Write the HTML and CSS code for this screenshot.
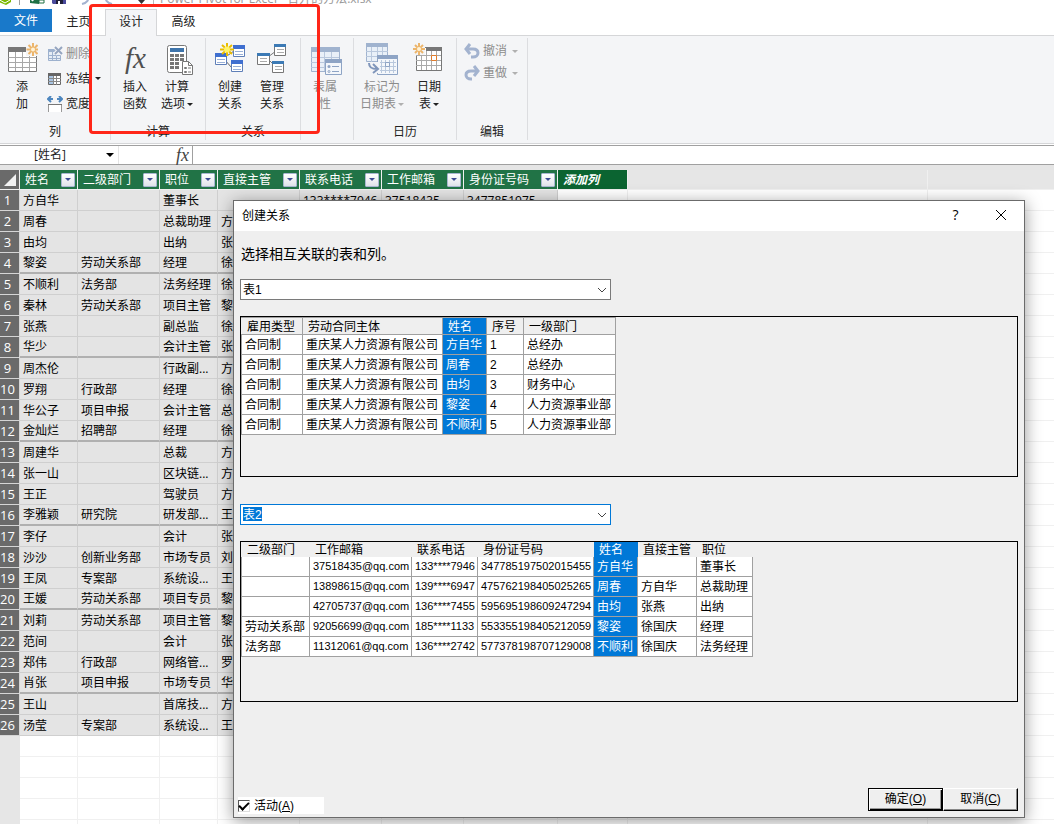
FILE: index.html
```html
<!DOCTYPE html>
<html lang="zh-CN">
<head>
  <meta charset="UTF-8">
  <title>Power Pivot for Excel - 合并的方法.xlsx</title>
  <link rel="stylesheet" href="styles.css">
</head>
<body>

  <header class="titlebar">
    <svg width="150" height="16" viewBox="0 0 150 16">
      <path d="M-4 8L5 4l6 3v6l-5 3-10-4z" fill="#7ab800"/><path d="M-2 10l7 4 5-3" fill="none" stroke="#fff"/>
      <path d="M19.5 0v16" stroke="#a0a0a0"/>
      <path d="M30 3l9-2v14l-9-1z" fill="#1e7145"/><path d="M39 4h5v10h-5z" fill="#fff" stroke="#1e7145"/><path d="M39 11h5M32 5l5 7" stroke="#1e7145"/><path d="M32 12l5-7" stroke="#fff" stroke-width="2"/>
      <path d="M52 2h14v13H53l-1-1z" fill="#4a4a9c"/><path d="M55 2h8v6h-8z" fill="#e6e6f5"/><path d="M56 11h7v4h-7z" fill="#1f1f3a"/><path d="M58 12h2v3h-2z" fill="#fff"/>
      <path d="M82 15c5-1 7-4 6-8" fill="none" stroke="#a3b3d0" stroke-width="2"/>
      <path d="M112 15c-5-1-7-4-6-8" fill="none" stroke="#a3b3d0" stroke-width="2"/>
      <path d="M138 11h7l-3.500 4z" fill="#333"/>
    </svg>
    <span class="titlebar-text">Power Pivot for Excel - 合并的方法.xlsx</span>
  </header>

  <nav class="tabs">
    <button class="tab tab-file">文件</button>
    <button class="tab">主页</button>
    <button class="tab tab-active">设计</button>
    <button class="tab">高级</button>
  </nav>

  <section class="ribbon">
    <div class="group group-cols">
      <div class="group-items">
        <button class="big">
          <svg width="32" height="32" viewBox="0 0 32 32">
            <path d="M2.500 4.500h28v24h-28z" fill="#fff" stroke="#777"/><path d="M2 4h20v5H2z" fill="#777"/>
            <path d="M2.500 14.500h28M2.500 19.500h28M2.500 24.500h28M9.500 9v19M16.500 9v19M23.500 9v19" stroke="#a8a8a8"/>
            <path d="M20 0h12v13H20z" fill="#f4f5f7"/>
            <path d="M27 0v13M20.500 6.500h13M22.500 2l9 9M31.500 2l-9 9" stroke="#ecb56c" stroke-width="2"/><circle cx="27" cy="6.500" r="2" fill="#fff3d6"/>
          </svg>
          <span>添<br>加</span>
        </button>
        <div class="small-list">
          <button class="small disabled">
            <svg width="16" height="16" viewBox="0 0 16 16">
              <path d="M1.500 3.500h12v11h-12z" fill="#e6edf6" stroke="#9db1ce"/><path d="M1 3h10v3H1z" fill="#9db1ce"/><path d="M1 9.500h13M1 12.500h13M5.500 6v8M9.500 6v8" stroke="#9db1ce"/>
              <path d="M8 1l7 7M15 1L8 8" stroke="#f4f5f7" stroke-width="4"/><path d="M8 1l7 7M15 1L8 8" stroke="#95a5c0" stroke-width="2"/>
            </svg>
            删除
          </button>
          <button class="small">
            <svg width="16" height="16" viewBox="0 0 16 16">
              <path d="M1.500 2.500h12v11h-12z" fill="#fff" stroke="#666"/><path d="M1 2h13v3H1z" fill="#666"/><path d="M2 5h4v8H2z" fill="#a9c5e3"/><path d="M1 7.500h13M1 10.500h13M6.500 5v9M9.500 5v9" stroke="#888"/>
            </svg>
            冻结 <i class="arrow"></i>
          </button>
          <button class="small">
            <svg width="16" height="16" viewBox="0 0 16 16">
              <path d="M1.500 8.500h13v9h-13z" fill="#fff" stroke="#999"/><path d="M1 8.500h14" stroke="#777"/>
              <path d="M1 3h5M10 3h5M4 0L1 3l3 3M12 0l3 3-3 3" fill="none" stroke="#4d86bf" stroke-width="2"/>
            </svg>
            宽度
          </button>
        </div>
      </div>
      <div class="group-label">列</div>
    </div>

    <div class="group">
      <div class="group-items">
        <button class="big">
          <svg width="32" height="32" viewBox="0 0 32 32">
            <text x="6" y="25" class="fx-big">fx</text>
          </svg>
          <span>插入<br>函数</span>
        </button>
        <button class="big">
          <svg width="32" height="32" viewBox="0 0 32 32">
            <rect x="6.500" y="2.500" width="19" height="27" rx="2" fill="#fff" stroke="#777"/><path d="M9 5h14v4H9z" fill="#3e74ab"/>
            <path d="M9 11h4v3H9zM14 11h4v3h-4zM19 11h4v3h-4zM9 15h4v3H9zM14 15h4v3h-4zM19 15h4v3h-4zM9 19h4v3H9zM14 19h4v3h-4zM9 23h4v3H9zM14 23h4v3h-4z" fill="#777"/>
            <path d="M21.500 18.500h6l4 4v9h-10z" fill="#fff" stroke="#777"/><path d="M27.500 18.500v4h4" fill="none" stroke="#777"/><path d="M23.500 24.500h2v1h-2zM23.500 28.500h2v1h-2zM27 25h3M27 29h3" fill="none" stroke="#777"/>
          </svg>
          <span>计算<br>选项 <i class="arrow"></i></span>
        </button>
      </div>
      <div class="group-label">计算</div>
    </div>

    <div class="group">
      <div class="group-items">
        <button class="big">
          <svg width="32" height="32" viewBox="0 0 32 32">
            <path d="M10 15L20 8M10 16l8 9" stroke="#666"/>
            <g fill="#fff" stroke="#5f7fb8"><path d="M19.500 3.500h11v10h-11zM1.500 11.500h11v10h-11zM17.500 18.500h11v10h-11z"/></g>
            <path d="M19 2h12v4H19zM1 10h12v4H1zM17 17h12v4H17z" fill="#3f6fd0"/>
            <path d="M21 8.500h8M21 11.500h8M3 16.500h8M3 19.500h8M19 23.500h8M19 26.500h8" stroke="#9ab0d8"/>
            <path d="M13 0v13M6 6.500h14M8 2l10 9M18 2L8 11" stroke="#e9bd00" stroke-width="2"/><circle cx="13" cy="6.500" r="3" fill="#fff36b"/>
          </svg>
          <span>创建<br>关系</span>
        </button>
        <button class="big">
          <svg width="32" height="32" viewBox="0 0 32 32">
            <path d="M12 14l8-6M13 17l6 6" stroke="#777"/>
            <g fill="#fff" stroke="#777"><path d="M18.500 1.500h11v11h-11zM1.500 10.500h12v11h-12zM16.500 18.500h11v11h-11z"/></g>
            <path d="M18 1h12v3H18zM1 10h13v3H1zM16 18h12v3H16z" fill="#3c7ab5"/>
            <path d="M21 6.500h7M21 9.500h7M4 15.500h7M4 18.500h7M19 23.500h7M19 26.500h7" stroke="#aaa"/>
          </svg>
          <span>管理<br>关系</span>
        </button>
      </div>
      <div class="group-label">关系</div>
    </div>

    <div class="group">
      <div class="group-items">
        <button class="big disabled">
          <svg class="spill" width="32" height="32" viewBox="0 0 32 32">
            <path d="M2.500 4.500h28v24h-28z" fill="#e9f0f8" stroke="#a0b3cf"/><path d="M2 4h29v5H2z" fill="#a0b3cf"/><path d="M2 14.500h28M2 19.500h28M2 24.500h28M8.500 9v19M15.500 9v19M22.500 9v19" stroke="#b9c8dd"/>
            <path d="M16.500 16.500h16v15h-16z" fill="#f4f7fb" stroke="#8ea4c5"/><path d="M16 16h17v4H16z" fill="#8ea4c5"/><path d="M23 23.500h7M23 28.500h7" stroke="#8ea4c5"/><circle cx="20" cy="23.500" r="1.500" fill="#8ea4c5"/><circle cx="20" cy="28.500" r="1" fill="none" stroke="#8ea4c5"/>
          </svg>
          <span>表属<br>性</span>
        </button>
      </div>
    </div>

    <div class="group group-date">
      <div class="group-items">
        <button class="big big-wide disabled">
          <svg width="32" height="32" viewBox="0 0 32 32">
            <path d="M.5.500h21v18H.5z" fill="#e9f0f8" stroke="#a0b3cf"/><path d="M0 0h22v4H0z" fill="#a0b3cf"/><path d="M0 8.500h22M0 13.500h22M5.500 4v15M11.500 4v15M16.500 4v15" stroke="#b9c8dd"/>
            <path d="M11.500 12.500h20v19h-20z" fill="#f4f7fb" stroke="#8ea4c5"/><path d="M11 12h21v4H11z" fill="#8ea4c5"/><path d="M14 19.500h16M14 23.500h16M14 27.500h16M15.500 17v13M19.500 17v13M23.500 17v13M27.500 17v13" stroke="#b9c8dd"/><path d="M19.500 19.500h4v4h-4z" fill="none" stroke="#8ea4c5"/>
            <path d="M1 19h11v11H1z" fill="#f4f5f7"/>
            <path d="M3 20c0 5 3 6 8 6M7 21l5 5-5 4" fill="none" stroke="#8096bb" stroke-width="2"/>
          </svg>
          <span>标记为<br>日期表 <i class="arrow"></i></span>
        </button>
        <button class="big">
          <svg width="32" height="32" viewBox="0 0 32 32">
            <path d="M3.500 4.500h25v23h-25z" fill="#fff" stroke="#777"/><path d="M13 4h16v4H13z" fill="#777"/>
            <path d="M3 12.500h25M3 17.500h25M3 22.500h25M8.500 12v15M13.500 8v19M18.500 8v19M23.500 8v19" stroke="#aaa"/>
            <path d="M0 0h12v12H0z" fill="#f4f5f7"/>
            <path d="M18.500 12.500h5v5h-5z" fill="#fff" stroke="#e07c2c"/>
            <path d="M6 0v12M0 6h12M2 2l8 8M10 2l-8 8" stroke="#ecb56c" stroke-width="2"/><circle cx="6" cy="6" r="2" fill="#fff3d6"/>
          </svg>
          <span>日期<br>表 <i class="arrow"></i></span>
        </button>
      </div>
      <div class="group-label">日历</div>
    </div>

    <div class="group group-edit">
      <div class="small-list edit-list">
        <button class="small disabled">
          <svg width="16" height="16" viewBox="0 0 16 16">
            <path d="M2 6h7c4 0 5 2 5 4s-2 4-5 4H7M6 1L2 6l4 5" fill="none" stroke="#a3b3cf" stroke-width="3"/>
          </svg>
          撤消 <i class="arrow"></i>
        </button>
        <button class="small disabled">
          <svg width="16" height="16" viewBox="0 0 16 16">
            <path d="M14 6H7c-4 0-5 2-5 4s2 4 5 4h1M10 1l4 5-4 5" fill="none" stroke="#a3b3cf" stroke-width="3"/>
          </svg>
          重做 <i class="arrow"></i>
        </button>
      </div>
      <div class="group-label">编辑</div>
    </div>
  </section>

  <div class="formula-bar">
    <div class="name-box">
      <select aria-label="名称框"><option>[姓名]</option></select>
      <i class="arrow"></i>
    </div>
    <label class="fx-label" for="formula">fx</label>
    <input id="formula" class="formula">
  </div>

  <table class="sheet">
    <colgroup>
      <col class="w-num"><col class="w-58"><col class="w-82"><col class="w-58"><col class="w-82"><col class="w-82"><col class="w-82"><col class="w-94"><col class="w-70"><col class="w-300"><col>
    </colgroup>
    <thead>
      <tr>
        <th class="corner"><svg width="19" height="18" viewBox="0 0 19 18"><path d="M16 3v12H4z" fill="#f2f2f2"/></svg></th>
        <th><div class="head">姓名<button class="filter" aria-label="筛选姓名"></button></div></th>
        <th><div class="head">二级部门<button class="filter" aria-label="筛选二级部门"></button></div></th>
        <th><div class="head">职位<button class="filter" aria-label="筛选职位"></button></div></th>
        <th><div class="head">直接主管<button class="filter" aria-label="筛选直接主管"></button></div></th>
        <th><div class="head">联系电话<button class="filter" aria-label="筛选联系电话"></button></div></th>
        <th><div class="head">工作邮箱<button class="filter" aria-label="筛选工作邮箱"></button></div></th>
        <th><div class="head">身份证号码<button class="filter" aria-label="筛选身份证号码"></button></div></th>
        <th class="add-col">添加列</th>
        <th class="blank"></th>
        <th class="blank"></th>
      </tr>
    </thead>
    <tbody id="rows"></tbody>
  </table>

  <div class="dialog" role="dialog" aria-labelledby="dialogTitle">
    <div class="dialog-title">
      <span id="dialogTitle">创建关系</span>
      <button class="dialog-btn" aria-label="帮助">?</button>
      <button class="dialog-btn" aria-label="关闭">
        <svg width="12" height="12" viewBox="0 0 12 12"><path d="M1 1l10 10M11 1L1 11" stroke="#000"/></svg>
      </button>
    </div>

    <div class="dialog-body">
      <p>选择相互关联的表和列。</p>

      <div class="combo">
        <select aria-label="表"><option>表1</option></select>
        <svg width="10" height="6" viewBox="0 0 10 6"><path d="M1 1l4 4 4-4" fill="none" stroke="#444"/></svg>
      </div>
      <div class="panel">
        <table class="preview preview-lined">
          <colgroup><col class="w-62"><col class="w-140"><col class="w-44"><col class="w-37"><col class="w-92"></colgroup>
          <thead>
            <tr><th>雇用类型</th><th>劳动合同主体</th><th class="picked">姓名</th><th>序号</th><th>一级部门</th></tr>
          </thead>
          <tbody>
            <tr><td>合同制</td><td>重庆某人力资源有限公司</td><td class="picked">方自华</td><td>1</td><td>总经办</td></tr>
            <tr><td>合同制</td><td>重庆某人力资源有限公司</td><td class="picked">周春</td><td>2</td><td>总经办</td></tr>
            <tr><td>合同制</td><td>重庆某人力资源有限公司</td><td class="picked">由均</td><td>3</td><td>财务中心</td></tr>
            <tr><td>合同制</td><td>重庆某人力资源有限公司</td><td class="picked">黎姿</td><td>4</td><td>人力资源事业部</td></tr>
            <tr><td>合同制</td><td>重庆某人力资源有限公司</td><td class="picked">不顺利</td><td>5</td><td>人力资源事业部</td></tr>
          </tbody>
        </table>
      </div>

      <div class="combo combo-focus">
        <select aria-label="相关表"><option>表2</option></select>
        <svg width="10" height="6" viewBox="0 0 10 6"><path d="M1 1l4 4 4-4" fill="none" stroke="#444"/></svg>
      </div>
      <div class="panel">
        <table class="preview preview-plain">
          <colgroup><col class="w-69"><col class="w-102"><col class="w-66"><col class="w-116"><col class="w-44"><col class="w-59"><col class="w-56"></colgroup>
          <thead>
            <tr><th>二级部门</th><th>工作邮箱</th><th>联系电话</th><th>身份证号码</th><th class="picked">姓名</th><th>直接主管</th><th>职位</th></tr>
          </thead>
          <tbody>
            <tr><td></td><td class="num">37518435@qq.com</td><td class="num">133****7946</td><td class="num">347785197502015455</td><td class="picked">方自华</td><td></td><td>董事长</td></tr>
            <tr><td></td><td class="num">13898615@qq.com</td><td class="num">139****6947</td><td class="num">475762198405025265</td><td class="picked">周春</td><td>方自华</td><td>总裁助理</td></tr>
            <tr><td></td><td class="num">42705737@qq.com</td><td class="num">136****7455</td><td class="num">595695198609247294</td><td class="picked">由均</td><td>张燕</td><td>出纳</td></tr>
            <tr><td>劳动关系部</td><td class="num">92056699@qq.com</td><td class="num">185****1133</td><td class="num">553355198405212059</td><td class="picked">黎姿</td><td>徐国庆</td><td>经理</td></tr>
            <tr><td>法务部</td><td class="num">11312061@qq.com</td><td class="num">136****2742</td><td class="num">577378198707129008</td><td class="picked">不顺利</td><td>徐国庆</td><td>法务经理</td></tr>
          </tbody>
        </table>
      </div>
    </div>

    <div class="dialog-footer">
      <label class="active-check"><input type="checkbox" checked><span>活动(<u>A</u>)</span></label>
      <button class="push push-default">确定(<u>O</u>)</button>
      <button class="push">取消(<u>C</u>)</button>
    </div>
  </div>

  <div class="highlight-box"></div>

  <script>
    const people = [
      ['方自华', '', '董事长', '', '133****7946', '37518435', '3477851975'],
      ['周春', '', '总裁助理', '方'],
      ['由均', '', '出纳', '张'],
      ['黎姿', '劳动关系部', '经理', '徐'],
      ['不顺利', '法务部', '法务经理', '徐'],
      ['秦林', '劳动关系部', '项目主管', '黎'],
      ['张燕', '', '副总监', '徐'],
      ['华少', '', '会计主管', '张'],
      ['周杰伦', '', '行政副...', '方'],
      ['罗翔', '行政部', '经理', '徐'],
      ['华公子', '项目申报', '会计主管', '总'],
      ['金灿烂', '招聘部', '经理', '徐'],
      ['周建华', '', '总裁', '方'],
      ['张一山', '', '区块链...', '方'],
      ['王正', '', '驾驶员', '方'],
      ['李雅颖', '研究院', '研发部...', '王'],
      ['李仔', '', '会计', '张'],
      ['沙沙', '创新业务部', '市场专员', '刘'],
      ['王凤', '专案部', '系统设...', '王'],
      ['王媛', '劳动关系部', '项目专员', '黎'],
      ['刘莉', '劳动关系部', '项目主管', '黎'],
      ['范间', '', '会计', '张'],
      ['郑伟', '行政部', '网络管...', '罗'],
      ['肖张', '项目申报', '市场专员', '华'],
      ['王山', '', '首席技...', '方'],
      ['汤莹', '专案部', '系统设...', '王']
    ];

    const rows = document.getElementById('rows');
    // data rows first, then empty rows down to the bottom of the window
    for (let i = 0; i < 31; i++) {
      const person = people[i];
      const tr = document.createElement('tr');
      if (person) tr.className = (i + 1) % 4 === 0 && i < 24 ? 'filled block-end' : 'filled';

      const num = document.createElement('th');
      num.className = 'row-num';
      num.textContent = person ? i + 1 : '';
      tr.appendChild(num);

      for (let c = 0; c < 10; c++) {
        const td = document.createElement('td');
        td.textContent = person && person[c] ? person[c] : '';
        if (person && c < 7) td.className = 'sel';
        tr.appendChild(td);
      }
      rows.appendChild(tr);
    }
  </script>
</body>
</html>
```

FILE: styles.css
```css
* {
  box-sizing: border-box;
}

body {
  margin: 0;
  height: 100vh;
  overflow: hidden;
  position: relative;
  background: #fff;
  color: #222;
  font-family: "Open Sans", "Noto Sans CJK SC", sans-serif;
  font-size: 12px;
  line-height: 16px;
}

button,
select,
input {
  font: inherit;
  color: inherit;
  margin: 0;
  padding: 0;
  border: none;
  border-radius: 0;
  background: none;
}

svg {
  display: block;
  flex: none;
}

.arrow {
  display: inline-block;
  border: 3px solid transparent;
  border-top-color: currentColor;
  border-bottom: none;
  vertical-align: middle;
}

/* title bar and tabs */
.titlebar {
  display: flex;
  align-items: flex-end;
  gap: 3px;
  height: 9px;
  padding-bottom: 4px;
}

.titlebar svg {
  overflow: visible;
}

.titlebar-text {
  padding-left: 6px;
  border-left: 1px solid #bbb;
  color: #999;
  line-height: 12px;
  white-space: nowrap;
}

.tabs {
  display: flex;
  height: 27px;
  border-bottom: 1px solid #d5d6d8;
}

.tab {
  width: 53px;
  height: 26px;
  padding-bottom: 1px;
}

.tab-file {
  width: 52px;
  height: 23px;
  padding-bottom: 0;
  background: #1979ca;
  color: #fff;
}

.tab-active {
  width: 52px;
  height: 27px;
  padding-bottom: 2px;
  background: #f4f5f7;
  border: 1px solid #d5d6d8;
  border-bottom: none;
}

/* ribbon */
.ribbon {
  display: flex;
  padding: 2px 0 3px;
  background: #f4f5f7;
  border-bottom: 1px solid #d5d6d8;
}

.group {
  display: flex;
  flex-direction: column;
  justify-content: space-between;
  height: 102px;
  padding-top: 5px;
  border-right: 1px solid #dcdde0;
}

.group-items {
  display: flex;
  padding: 0 7px 0 3px;
}

.group-cols .group-items {
  padding: 0;
}

.group-date .group-items {
  padding: 0 6px 0 2px;
}

.group-edit {
  width: 71px;
}

.group-label {
  text-align: center;
  line-height: 16px;
}

.big {
  display: flex;
  flex-direction: column;
  align-items: center;
  gap: 3px;
  width: 42px;
  line-height: 17px;
  white-space: nowrap;
}

.group-cols .big {
  width: 44px;
}

.big-wide {
  width: 52px;
}

.big .arrow {
  margin-left: -1px;
}

.spill {
  overflow: visible;
}

.small-list {
  display: flex;
  flex-direction: column;
  width: 63px;
  margin-left: 3px;
  margin-top: -2px;
}

.small {
  display: flex;
  align-items: center;
  gap: 3px;
  height: 25px;
  white-space: nowrap;
}

.small .arrow {
  margin-left: 2px;
}

.edit-list {
  margin: -3px 0 0 7px;
}

.edit-list .small {
  height: 22px;
}

.disabled {
  color: #8c8c8c;
}

.disabled .arrow {
  color: #b0b0b0;
}

.fx-big,
.fx-label {
  font-family: "Liberation Serif", serif;
  font-style: italic;
}

.fx-big {
  font-size: 29px;
  fill: #505050;
}

/* formula bar */
.formula-bar {
  display: flex;
  height: 20px;
  margin: 1px 0 5px;
  background: #fff;
  border: 1px solid #a0a0a0;
  border-width: 1px 0;
  box-shadow: 0 5px 0 #e5e5e5;
}

.name-box {
  display: flex;
  align-items: center;
  width: 119px;
  padding-right: 4px;
  border-right: 1px solid #e5e5e5;
}

.name-box select {
  flex: 1;
  padding-left: 34px;
  appearance: none;
}

.name-box .arrow {
  border-width: 4px 4px 0;
  color: #000;
}

.fx-label {
  width: 74px;
  padding-right: 3px;
  border-right: 1px solid #a0a0a0;
  text-align: right;
  font-size: 18px;
  line-height: 18px;
  color: #444;
}

.formula {
  flex: 1;
  outline: none;
}

/* data sheet */
.sheet {
  width: 100%;
  table-layout: fixed;
  border-collapse: separate;
  border-spacing: 0;
}

.sheet th,
.sheet td {
  height: 21px;
  padding: 0 0 0 3px;
  border-right: 1px solid #f0f0f0;
  border-bottom: 1px solid #f0f0f0;
  font-weight: normal;
  text-align: left;
  white-space: nowrap;
  overflow: hidden;
  line-height: 18px;
  color: #000;
}

.sheet td {
  padding-top: 2px;
}

.sheet tr > :last-child {
  border-right: none;
}

.sheet thead th {
  height: 20px;
  padding: 0;
  background: #217346;
  border-color: #f0f0f0;
  color: #fff;
}

.head {
  display: flex;
  align-items: center;
  justify-content: space-between;
  padding: 0 2px 0 5px;
}

.filter {
  display: flex;
  align-items: center;
  justify-content: center;
  width: 14px;
  height: 14px;
  border: 1px solid #a9b7d1;
  border-radius: 1px;
  background: linear-gradient(#fff, #dfe3ea);
}

.filter::before {
  content: "";
  border: 3px solid transparent;
  border-top-color: #3d4a94;
  border-bottom: none;
}

.sheet thead .corner {
  background: #6a6a6a;
}

.sheet thead .add-col {
  padding-left: 5px;
  background: #0b6431;
  font-weight: bold;
  font-style: italic;
}

.sheet thead .blank {
  background: #e6e6e6;
}

.sheet .sel {
  background: #e4e4e4;
  border-color: #cfcfcf;
}

.sheet .block-end .sel {
  padding-top: 1px;
  border-bottom: 2px solid #b0b0b0;
}

.sheet .row-num {
  padding: 0 4px 0 0;
  background: #e6e6e6;
  border-color: #e6e6e6;
  text-align: center;
  font-size: 13px;
}

.sheet .filled .row-num {
  background: #6a6a6a;
  border-color: #d5d5d5;
  color: #fff;
}

.w-num { width: 20px; }
.w-37 { width: 37px; }
.w-44 { width: 44px; }
.w-56 { width: 56px; }
.w-58 { width: 58px; }
.w-59 { width: 59px; }
.w-62 { width: 62px; }
.w-66 { width: 66px; }
.w-69 { width: 69px; }
.w-70 { width: 70px; }
.w-82 { width: 82px; }
.w-92 { width: 92px; }
.w-94 { width: 94px; }
.w-102 { width: 102px; }
.w-116 { width: 116px; }
.w-140 { width: 140px; }
.w-300 { width: 300px; }

/* dialog */
.dialog {
  position: absolute;
  top: 200px;
  left: 233px;
  right: 29px;
  border: 1px solid #6b6b6b;
  background: #efefef;
  color: #000;
  font-family: "Liberation Sans", "Noto Sans CJK SC", sans-serif;
  box-shadow: 0 3px 16px rgba(0, 0, 0, 0.4);
}

.dialog-title {
  display: flex;
  align-items: center;
  height: 30px;
  padding-left: 8px;
  background: #fff;
}

.dialog-title span {
  flex: 1;
}

.dialog-btn {
  display: flex;
  align-items: center;
  justify-content: center;
  width: 45px;
  height: 30px;
  padding: 0 2px 2px 0;
  font-family: "Open Sans", sans-serif;
  font-size: 14px;
}

.dialog-body {
  padding: 13px 6px 0;
}

.dialog-body p {
  margin: 0 0 15px 1px;
  font-size: 14px;
  line-height: 20px;
}

.combo {
  display: flex;
  align-items: center;
  width: 371px;
  height: 21px;
  margin-bottom: 16px;
  padding-right: 3px;
  border: 1px solid #7a7a7a;
  background: #fff;
}

.combo select {
  flex: 1;
  height: 19px;
  padding-left: 2px;
  appearance: none;
  outline: none;
}

.combo-focus {
  border-color: #0078d7;
}

.combo-focus select {
  color: #fff;
  background: linear-gradient(#0078d7, #0078d7) 2px 2px / 19px 14px no-repeat;
}

.panel {
  min-height: 161px;
  margin-bottom: 27px;
  border: 1px solid #000;
}

.preview {
  table-layout: fixed;
  width: 1px;
  border-collapse: separate;
  border-spacing: 0;
}

.preview th,
.preview td {
  padding: 0 0 0 3px;
  text-align: left;
  font-weight: normal;
  white-space: nowrap;
}

.preview td {
  height: 20px;
  padding-top: 2px;
  line-height: 17px;
  background: #fff;
  border-right: 1px solid #a0a0a0;
  border-bottom: 1px solid #a0a0a0;
}

.preview td:first-child {
  border-left: 1px solid #a0a0a0;
}

.preview th {
  padding-left: 5px;
}

.preview th:first-child {
  padding-left: 6px;
}

.preview-lined th {
  height: 18px;
  padding-top: 2px;
  line-height: 14px;
  border: 1px solid #a0a0a0;
  border-left: none;
}

.preview-plain th {
  height: 15px;
  padding-top: 2px;
  line-height: 13px;
}

.preview .picked {
  background: #0078d7;
  color: #fff;
}

.preview .num {
  padding-top: 0;
  font-size: 11px;
}

.dialog-footer {
  display: flex;
  padding: 59px 6px 3px 4px;
}

.active-check {
  display: flex;
  align-items: center;
  gap: 4px;
  width: 86px;
  height: 17px;
  margin: 9px auto 0 0;
  background: #fff;
}

.active-check input {
  display: flex;
  align-items: center;
  justify-content: center;
  appearance: none;
  width: 12px;
  height: 12px;
  border: 1px solid;
  border-color: #555 #ddd #ddd #555;
}

.active-check input:checked::before {
  content: "";
  width: 4px;
  height: 8px;
  margin-bottom: 2px;
  border: solid #000;
  border-width: 0 2px 2px 0;
  transform: rotate(45deg);
}

.push {
  width: 75px;
  height: 23px;
  padding-bottom: 2px;
  border: 1px solid;
  border-color: #fff #000 #000 #fff;
  box-shadow: inset -1px -1px 0 #888;
}

.push-default {
  border: 1px solid #000;
  box-shadow: inset 1px 1px 0 #fff, inset -1px -1px 0 #000, inset -2px -2px 0 #999;
}

/* red frame over the design tab */
.highlight-box {
  position: absolute;
  top: 4px;
  left: 89px;
  width: 231px;
  height: 130px;
  border: 3px solid #ff2618;
  border-radius: 4px;
  pointer-events: none;
}
```
